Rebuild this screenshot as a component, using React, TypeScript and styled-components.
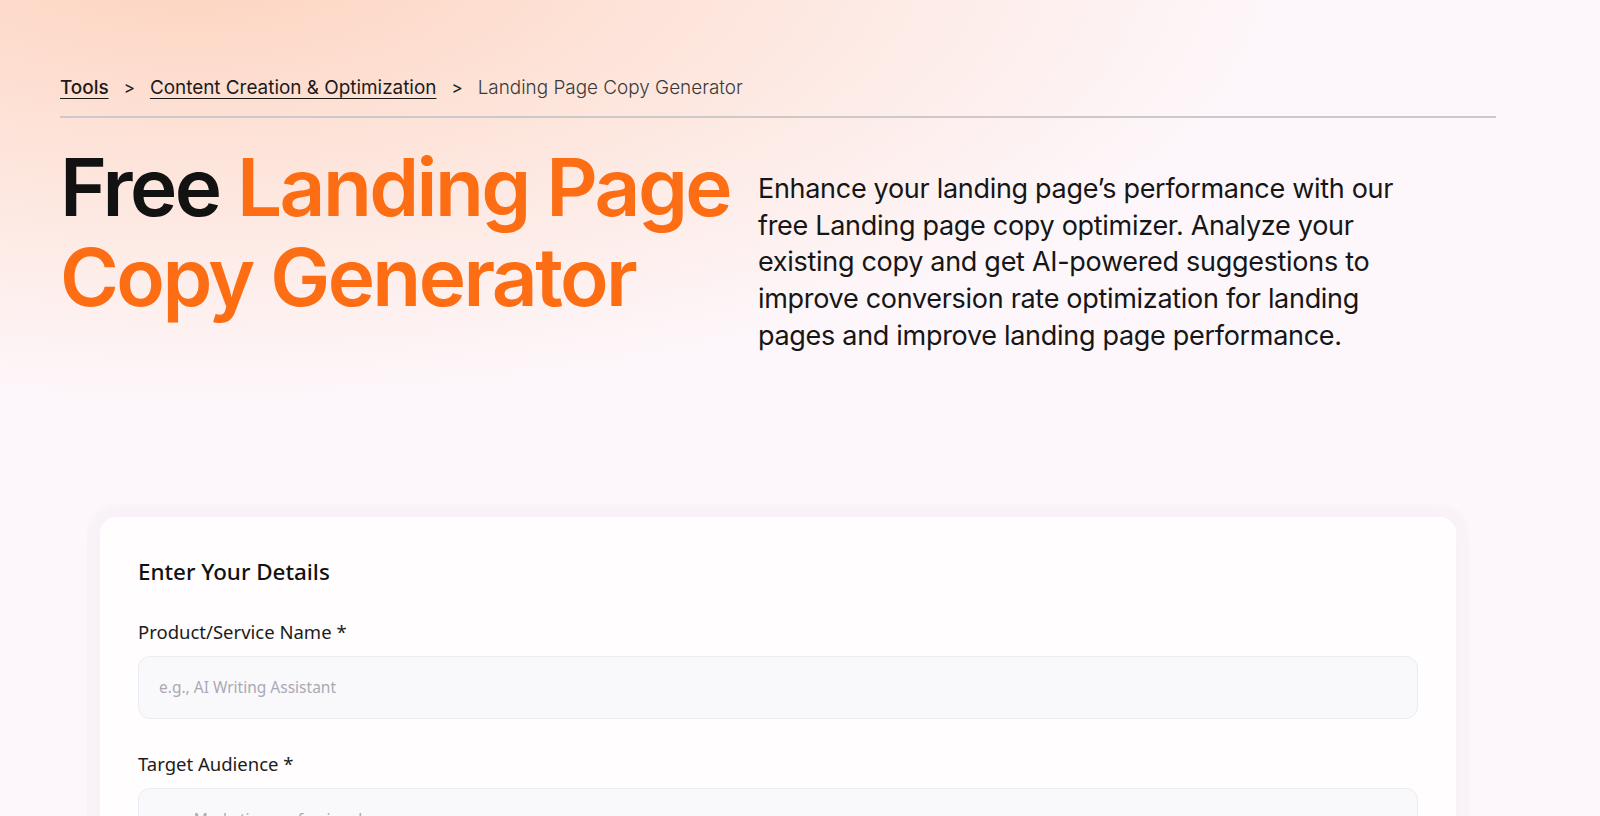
import React from 'react';
import styled, { createGlobalStyle } from 'styled-components';

const GlobalStyle = createGlobalStyle`
  html, body {
    margin: 0;
    padding: 0;
  }
  body {
    background-color: #fdf7fb;
    font-family: 'Inter', 'Liberation Sans', sans-serif;
    color: #141414;
  }
`;

const Page = styled.div`
  min-height: 816px;
  background:
    radial-gradient(ellipse 1100px 440px at 12% -4%, #fdd3bf 0%, rgba(253, 220, 204, 0.78) 38%, rgba(253, 247, 251, 0) 100%),
    #fdf7fb;
  overflow: hidden;
`;

const Container = styled.div`
  width: 1436px;
  margin-left: 60px;
  padding-top: 75px;
`;

const Breadcrumb = styled.nav`
  display: flex;
  align-items: center;
  gap: 14px;
  font-size: 18.9px;
  line-height: 26px;
  color: #1b1b1b;
  padding-bottom: 15px;
  border-bottom: 2px solid #cdc8ca;
`;

const Crumb = styled.a<{ $strong?: boolean }>`
  color: #1b1b1b;
  text-decoration: underline;
  text-underline-offset: 4px;
  text-decoration-thickness: 1px;
  font-weight: ${(p) => (p.$strong ? 500 : 400)};
`;

const Separator = styled.span`
  font-size: 17px;
  color: #222;
  padding: 0 1px;
`;

const Current = styled.span`
  color: #3a3a3a;
  font-weight: 300;
`;

const Hero = styled.section`
  display: flex;
  align-items: flex-start;
  padding-top: 24px;
`;

const Title = styled.h1`
  margin: 0;
  width: 698px;
  flex-shrink: 0;
  font-size: 80px;
  line-height: 90px;
  font-weight: 600;
  letter-spacing: -2.6px;
  color: #121212;
`;

const Accent = styled.span`
  color: #fd6d14;
`;

const Intro = styled.p`
  margin: 0;
  margin-top: 29px;
  font-size: 27px;
  line-height: 36.7px;
  letter-spacing: -0.3px;
  color: #161616;
  white-space: nowrap;
`;

const Card = styled.div`
  margin: 162px 40px 0;
  background: #fffdfe;
  border-radius: 16px;
  box-shadow: 0 0 0 13px rgba(246, 240, 246, 0.45), 0 4px 24px rgba(60, 30, 60, 0.03);
  padding: 40px 38px 40px;
  font-family: 'Noto Sans', 'Open Sans', sans-serif;
`;

const CardTitle = styled.h2`
  margin: 0 0 32px;
  font-size: 22.4px;
  line-height: 30px;
  font-weight: 500;
  color: #111;
`;

const Field = styled.div`
  display: flex;
  flex-direction: column;
  gap: 11px;
  margin-bottom: 32px;
`;

const Label = styled.label`
  font-size: 18.5px;
  line-height: 26px;
  color: #1c1c1c;
`;

const Input = styled.input`
  box-sizing: border-box;
  width: 100%;
  height: 63px;
  padding: 0 20px;
  border-radius: 12px;
  border: 1px solid #ebebf2;
  background: #f9f9fc;
  font-family: 'Noto Sans', 'Open Sans', sans-serif;
  font-size: 15.5px;
  color: #222;
  outline: none;
  &::placeholder {
    color: #a9a9b4;
  }
`;

const introLines = [
  'Enhance your landing page’s performance with our',
  'free Landing page copy optimizer. Analyze your',
  'existing copy and get AI-powered suggestions to',
  'improve conversion rate optimization for landing',
  'pages and improve landing page performance.',
];

const App: React.FC = () => {
  return (
    <Page>
      <GlobalStyle />
      <Container>
        <Breadcrumb>
          <Crumb href="#" $strong>Tools</Crumb>
          <Separator>&gt;</Separator>
          <Crumb href="#">Content Creation &amp; Optimization</Crumb>
          <Separator>&gt;</Separator>
          <Current>Landing Page Copy Generator</Current>
        </Breadcrumb>

        <Hero>
          <Title>
            Free <Accent>Landing Page Copy Generator</Accent>
          </Title>
          <Intro>
            {introLines.map((line, i) => (
              <React.Fragment key={i}>
                {line}
                {i < introLines.length - 1 && <br />}
              </React.Fragment>
            ))}
          </Intro>
        </Hero>

        <Card>
          <CardTitle>Enter Your Details</CardTitle>
          <Field>
            <Label>Product/Service Name *</Label>
            <Input placeholder="e.g., AI Writing Assistant" />
          </Field>
          <Field>
            <Label>Target Audience *</Label>
            <Input placeholder="e.g., Marketing professionals" />
          </Field>
        </Card>
      </Container>
    </Page>
  );
};

export default App;
